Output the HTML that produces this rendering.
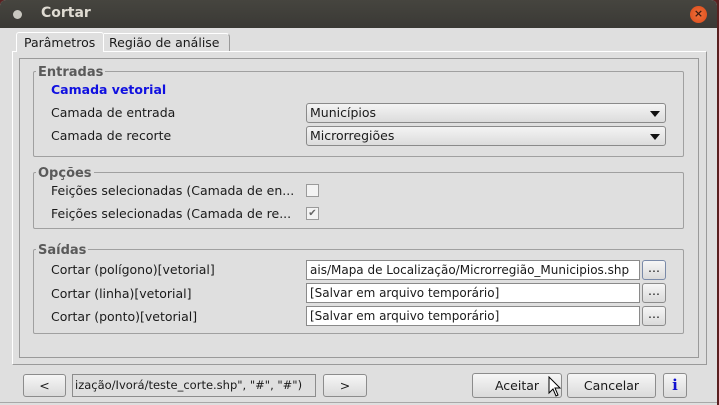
<!DOCTYPE html>
<html><head><meta charset="utf-8"><style>
*{margin:0;padding:0;box-sizing:border-box}
body{width:719px;height:405px;overflow:hidden;background:#5a2020;font-family:"DejaVu Sans","Liberation Sans",sans-serif;font-size:12.5px;color:#1a1a1a;position:relative}
.a{position:absolute}
.win{left:0;top:0;width:717px;height:405px;background:#dfdfdf;border-radius:6px 6px 0 0;overflow:hidden}
.title{left:0;top:0;width:717px;height:28px;background:linear-gradient(#46453f,#3a3935);color:#dfdbd2;font-size:14px;font-weight:bold}
.grp{border:1px solid #a0a0a0;border-radius:2px}
.gl{background:#dfdfdf;color:#5a5a5a;font-weight:bold;font-size:13px;padding:0 2px;line-height:14px}
.combo{border:1px solid #8a8a8a;border-radius:3px;background:linear-gradient(#f4f4f4,#dcdcdc);height:20px;padding-left:3px;line-height:17px}
.field{background:#fff;border:1px solid #8a8a8a;height:20px;line-height:18px;padding-left:3px;white-space:nowrap;overflow:hidden;font-size:12px}
.btn{border:1px solid #8c8c8c;border-radius:3px;background:linear-gradient(#f6f6f6,#dadada);text-align:center}
.cb{width:13px;height:13px;border:1px solid #9a9a9a;background:#f3f3f3}
.arrow{width:0;height:0;border-left:5px solid transparent;border-right:5px solid transparent;border-top:6px solid #111}
</style></head><body>
<div class="a win">
<div class="a title"><div class="a" style="left:13px;top:10px;width:9px;height:9px;border-radius:50%;background:#c9c7c0"></div><div class="a" style="left:41px;top:5px">Cortar</div>
<div class="a" style="left:690px;top:6px;width:17px;height:17px;border-radius:50%;background:radial-gradient(#f0703a,#d94a1a);color:#3a1a10;font-size:11px;text-align:center;line-height:16px">×</div></div>
<div class="a" style="left:12px;top:51px;width:695px;height:314px;border:1px solid #fff;border-right-color:#9a9a9a;border-bottom-color:#9a9a9a"></div>
<div class="a" style="left:16px;top:32px;width:88px;height:20px;border:1px solid #fff;border-bottom:none;background:#dfdfdf;border-radius:3px 3px 0 0"></div>
<div class="a" style="left:24px;top:35px">Parâmetros</div>
<div class="a" style="left:104px;top:33px;width:126px;height:18px;border-top:1px solid #fff;border-right:1px solid #9a9a9a;border-radius:0 4px 0 0"></div>
<div class="a" style="left:109px;top:35px">Região de análise</div>
<div class="a" style="left:19px;top:58px;width:680px;height:300px;border:1px solid #9a9a9a"></div>
<div class="a grp" style="left:33px;top:71px;width:651px;height:86px"></div>
<div class="a gl" style="left:36px;top:66px">Entradas</div>
<div class="a" style="left:51px;top:82px;color:#1010e0;font-weight:bold;font-size:12.5px">Camada vetorial</div>
<div class="a" style="left:51px;top:105px">Camada de entrada</div>
<div class="a combo" style="left:306px;top:103px;width:360px">Municípios<div class="a arrow" style="right:5px;top:7px"></div></div>
<div class="a" style="left:51px;top:128px">Camada de recorte</div>
<div class="a combo" style="left:306px;top:126px;width:360px">Microrregiões<div class="a arrow" style="right:5px;top:7px"></div></div>
<div class="a grp" style="left:33px;top:172px;width:651px;height:57px"></div>
<div class="a gl" style="left:36px;top:167px">Opções</div>
<div class="a" style="left:51px;top:183px">Feições selecionadas (Camada de en...</div>
<div class="a cb" style="left:306px;top:184px"></div>
<div class="a" style="left:51px;top:206px">Feições selecionadas (Camada de re...</div>
<div class="a cb" style="left:306px;top:207px;color:#666;font-size:10px;line-height:11px;text-align:center">✔</div>
<div class="a grp" style="left:33px;top:249px;width:651px;height:85px"></div>
<div class="a gl" style="left:36px;top:244px">Saídas</div>
<div class="a" style="left:51px;top:262px">Cortar (polígono)[vetorial]</div>
<div class="a field" style="left:306px;top:260px;width:334px">ais/Mapa de Localização/Microrregião_Municipios.shp</div>
<div class="a btn" style="left:642px;top:260px;width:24px;height:20px;line-height:14px;border-color:#7a8aa8">...</div>
<div class="a" style="left:51px;top:286px">Cortar (linha)[vetorial]</div>
<div class="a field" style="left:306px;top:283px;width:334px">[Salvar em arquivo temporário]</div>
<div class="a btn" style="left:642px;top:283px;width:24px;height:20px;line-height:14px">...</div>
<div class="a" style="left:51px;top:309px">Cortar (ponto)[vetorial]</div>
<div class="a field" style="left:306px;top:306px;width:334px">[Salvar em arquivo temporário]</div>
<div class="a btn" style="left:642px;top:306px;width:24px;height:20px;line-height:14px">...</div>
<div class="a btn" style="left:23px;top:374px;width:43px;height:23px;line-height:21px">&lt;</div>
<div class="a" style="left:72px;top:374px;width:244px;height:23px;border:1px solid #8c8c8c;line-height:21px;padding-left:2px;font-size:11.5px;white-space:nowrap;overflow:hidden">ização/Ivorá/teste_corte.shp", "#", "#")</div>
<div class="a btn" style="left:323px;top:374px;width:44px;height:23px;line-height:21px">&gt;</div>
<div class="a btn" style="left:472px;top:373px;width:90px;height:25px;line-height:23px">Aceitar</div>
<div class="a btn" style="left:567px;top:373px;width:89px;height:25px;line-height:23px">Cancelar</div>
<div class="a btn" style="left:663px;top:373px;width:24px;height:25px;line-height:23px;color:#1010d0;font-weight:bold;font-family:'DejaVu Serif',serif;font-size:15px">i</div>
<svg class="a" style="left:548px;top:376px" width="14" height="22" viewBox="0 0 14 22"><path d="M1 1 L1 17 L5 13 L8 20 L10 19 L7 12 L12 12 Z" fill="#fff" stroke="#000" stroke-width="1"/></svg>
<div class="a" style="left:0;top:402px;width:717px;height:1px;background:#a8a8a8"></div>
</div>
</body></html>
